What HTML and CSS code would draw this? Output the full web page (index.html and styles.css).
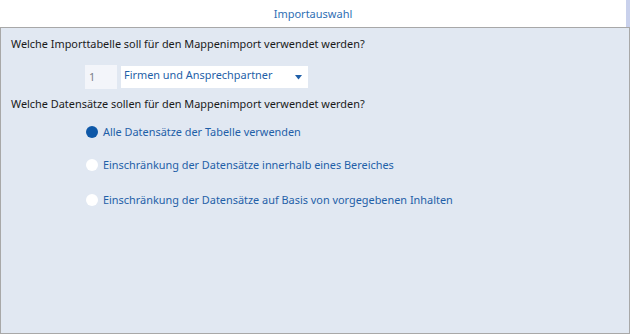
FILE: index.html
```html
<!DOCTYPE html>
<html lang="de">
<head>
<meta charset="utf-8">
<title>Importauswahl</title>
<link rel="stylesheet" href="styles.css">
</head>
<body>
<div class="window">
  <header class="titlebar">
    <span class="title">Importauswahl</span>
    <span class="edge"></span>
  </header>
  <main class="panel">
    <p class="question">Welche Importtabelle soll für den Mappenimport verwendet werden?</p>
    <div class="table-row">
      <div class="numbox">1</div>
      <div class="select">
        <span class="select-text">Firmen und Ansprechpartner</span>
        <svg class="arrow" width="7" height="5" viewBox="0 0 7 5"><path d="M0 0H7L3.5 4.5Z" fill="#1f5fa8"/></svg>
      </div>
    </div>
    <p class="question">Welche Datensätze sollen für den Mappenimport verwendet werden?</p>
    <ul class="options">
      <li class="option"><span class="radio checked"></span><span class="label">Alle Datensätze der Tabelle verwenden</span></li>
      <li class="option"><span class="radio"></span><span class="label">Einschränkung der Datensätze innerhalb eines Bereiches</span></li>
      <li class="option third"><span class="radio"></span><span class="label">Einschränkung der Datensätze auf Basis von vorgegebenen Inhalten</span></li>
    </ul>
  </main>
</div>
</body>
</html>
```

FILE: styles.css
```css
html, body {
  margin: 0;
  padding: 0;
  width: 630px;
  height: 334px;
  overflow: hidden;
  background: #ffffff;
}
body {
  font-family: "Noto Sans", "Open Sans", sans-serif;
  font-size: 10.9px;
}
.window {
  width: 630px;
  height: 334px;
  display: flex;
  flex-direction: column;
}
.titlebar {
  height: 27px;
  display: flex;
  align-items: center;
  justify-content: center;
  position: relative;
  background: #ffffff;
  border-bottom: 1px solid #a8a8a8;
}
.title {
  color: #2f6fb4;
  font-size: 11px;
  margin-top: -1px;
  margin-left: -4px;
}
.edge {
  position: absolute;
  right: 0;
  top: 0;
  width: 4px;
  height: 27px;
  background: #c9d1ec;
}
.panel {
  flex: 1;
  background: #e1e8f2;
  border-left: 1px solid #a8a8a8;
  border-right: 1px solid #a8a8a8;
  border-bottom: 1px solid #a8a8a8;
  padding: 8px 0 0 10px;
  display: flex;
  flex-direction: column;
}
.question {
  margin: 0;
  color: #1a1a1a;
  line-height: 16px;
}
.table-row {
  display: flex;
  align-items: flex-start;
  gap: 4px;
  margin: 13px 0 7px 74px;
}
.numbox {
  width: 28px;
  height: 24px;
  background: #f3f5fa;
  color: #7a7f88;
  padding-left: 4px;
  line-height: 24px;
}
.select {
  width: 187px;
  height: 22px;
  margin-top: 1px;
  background: #ffffff;
  display: flex;
  align-items: flex-start;
  justify-content: space-between;
  padding: 0 6px 0 3px;
  box-sizing: border-box;
}
.select-text {
  color: #1f5fa8;
  line-height: 16px;
  margin-top: 1px;
}
.arrow {
  margin-top: 9px;
}
.options {
  list-style: none;
  margin: 12px 0 0 75px;
  padding: 0;
  display: flex;
  flex-direction: column;
  gap: 17px;
}
.option {
  display: flex;
  align-items: center;
  gap: 5px;
  height: 16px;
  line-height: 16px;
}
.option.third {
  margin-top: 2px;
}
.radio {
  width: 12px;
  height: 12px;
  border-radius: 50%;
  background: #ffffff;
  flex: none;
}
.radio.checked {
  background: #0e58a8;
}
.label {
  color: #1f5fa8;
}
```
